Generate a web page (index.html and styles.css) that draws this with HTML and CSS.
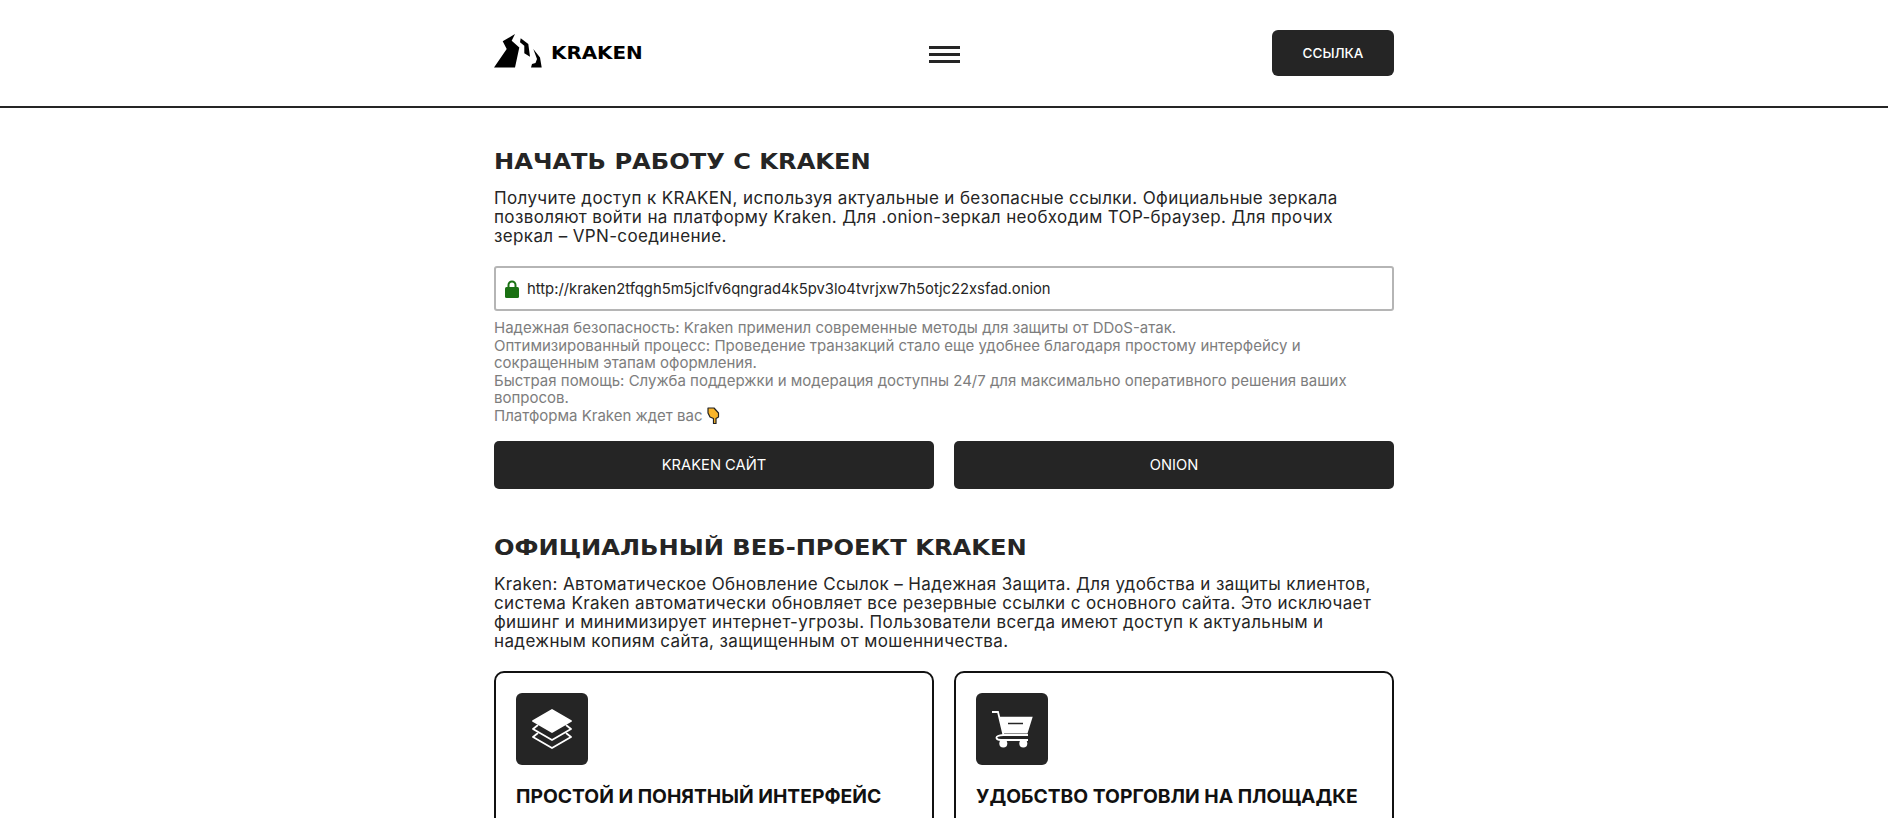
FILE: index.html
```html
<!DOCTYPE html>
<html lang="ru">

<head>
    <meta charset="UTF-8">
    <meta name="viewport" content="width=device-width, initial-scale=1.0">
    <title>Kraken</title>
    <link rel="stylesheet" href="styles.css">
</head>

<body>
    <header class="site-header">
        <div class="container header-row">
            <a class="logo" href="#">
                <svg class="logo-icon" viewBox="0 0 48 34" width="48" height="34">
                    <path fill="#000" d="M21 0 L8.700 7.300 L12.700 15 L0 33.400 H21 L25.300 13.400 L17.700 6.700 Z" />
                    <path fill="#000" d="M26.700 4.300 L34.300 10 L36 22.700 L30.300 19.300 L30.300 11.700 L26 8.300 Z" />
                    <path fill="#000" d="M39.300 15 L46 23.400 L47.700 33.400 H37 L38 30 L41.500 29 L43 25 Z" />
                </svg>
                <span class="logo-text">KRAKEN</span>
            </a>
            <button class="burger" aria-label="Меню"><span></span><span></span><span></span></button>
            <a class="header-link" href="#">ССЫЛКА</a>
        </div>
    </header>

    <main class="container">
        <section class="block-start">
            <h2>НАЧАТЬ РАБОТУ С KRAKEN</h2>
            <p class="lead">Получите доступ к KRAKEN, используя актуальные и безопасные ссылки. Официальные зеркала позволяют войти на платформу Kraken. Для .onion-зеркал необходим TOP-браузер. Для прочих зеркал – VPN-соединение.</p>

            <div class="url-box">
                <svg class="lock" viewBox="0 0 14 18" width="14" height="18">
                    <path fill="none" stroke="#1a7113" stroke-width="2" d="M3.500 8 V5 a3.500 3.500 0 0 1 7 0 V8" />
                    <rect fill="#1a7113" x="0" y="7" width="14" height="11" rx="1.500" />
                </svg>
                <span>http://kraken2tfqgh5m5jclfv6qngrad4k5pv3lo4tvrjxw7h5otjc22xsfad.onion</span>
            </div>

            <p class="note">Надежная безопасность: Kraken применил современные методы для защиты от DDoS-атак.<br>
                Оптимизированный процесс: Проведение транзакций стало еще удобнее благодаря простому интерфейсу и сокращенным этапам оформления.<br>
                Быстрая помощь: Служба поддержки и модерация доступны 24/7 для максимально оперативного решения ваших вопросов.<br>
                Платформа Kraken ждет вас
                <svg class="hand" viewBox="0 0 13 18" width="13" height="18">
                    <path fill="#f9b52b" stroke="#222" stroke-width="1.200" stroke-linejoin="round" d="M1 1 H7 L11.500 6 V10 L9 11.500 V16.500 H6.500 V11.500 L3 10 L1 6 Z" />
                </svg></p>

            <div class="two-col">
                <a class="big-button" href="#">KRAKEN САЙТ</a>
                <a class="big-button" href="#">ONION</a>
            </div>
        </section>

        <section class="block-project">
            <h2>ОФИЦИАЛЬНЫЙ ВЕБ-ПРОЕКТ KRAKEN</h2>
            <p class="lead">Kraken: Автоматическое Обновление Ссылок – Надежная Защита. Для удобства и защиты клиентов, система Kraken автоматически обновляет все резервные ссылки с основного сайта. Это исключает фишинг и минимизирует интернет-угрозы. Пользователи всегда имеют доступ к актуальным и надежным копиям сайта, защищенным от мошенничества.</p>

            <div class="two-col cards">
                <div class="card">
                    <div class="card-icon">
                        <svg viewBox="0 0 40 40" width="40" height="40" fill="none" stroke="#fff" stroke-width="1.800" stroke-linejoin="round">
                            <path d="M20 1 L39 12 L20 23 L1 12 Z" fill="#fff" />
                            <path d="M6 16 L1 20 L20 31 L39 20 L34 16" />
                            <path d="M6 24 L1 28 L20 39 L39 28 L34 24" />
                        </svg>
                    </div>
                    <h3>ПРОСТОЙ И ПОНЯТНЫЙ ИНТЕРФЕЙС</h3>
                </div>
                <div class="card">
                    <div class="card-icon">
                        <svg viewBox="0 0 41 40" width="41" height="40" fill="none">
                            <path d="M0 3 H6 L11.500 26 H36" stroke="#fff" stroke-width="1.800" />
                            <path fill="#fff" d="M7.500 7.700 H40.700 L35.500 24.500 H11.300 Z" />
                            <path d="M16 14.500 H31" stroke="#252525" stroke-width="1.500" />
                            <path d="M11.500 26 Q4 26.500 4.500 29 Q5 31 9 31 H36" stroke="#fff" stroke-width="1.800" />
                            <circle cx="11.300" cy="34.500" r="4" fill="#fff" />
                            <circle cx="31.300" cy="34.500" r="4" fill="#fff" />
                        </svg>
                    </div>
                    <h3>УДОБСТВО ТОРГОВЛИ НА ПЛОЩАДКЕ</h3>
                </div>
            </div>
        </section>
    </main>
</body>

</html>
```

FILE: styles.css
```css
html, body {
    height: 100%;
    overflow: hidden;
}

body {
    font-family: Inter, "Noto Sans", Arial, sans-serif;
    margin: 0;
    padding: 0;
    background-color: #fff;
    color: #252525;
}

.container {
    width: 900px;
    margin: 0 auto;
}

.site-header {
    height: 106px;
    border-bottom: 2px solid #252525;
}

.header-row {
    display: grid;
    grid-template-columns: 1fr auto 1fr;
    align-items: center;
    height: 100%;
}

.logo {
    display: flex;
    align-items: center;
    gap: 9px;
    text-decoration: none;
    color: #000;
}

.logo-icon {
    margin-top: -5px;
}

.logo-text {
    font-family: "DejaVu Sans", sans-serif;
    font-weight: 700;
    font-size: 17px;
    transform: scaleX(1.17);
    transform-origin: left center;
}

.burger {
    display: flex;
    flex-direction: column;
    gap: 4px;
    width: 31px;
    padding: 0;
    margin-top: 3px;
    background: none;
    border: none;
}

.burger span {
    display: block;
    height: 3px;
    background-color: #252525;
}

.header-link {
    justify-self: end;
    width: 122px;
    height: 46px;
    display: flex;
    align-items: center;
    justify-content: center;
    background-color: #252525;
    color: #fff;
    font-size: 13.500px;
    font-weight: 500;
    border-radius: 6px;
    text-decoration: none;
}

h2 {
    font-family: "DejaVu Sans", sans-serif;
    font-size: 21px;
    line-height: 26px;
    font-weight: 700;
    margin: 0 0 14px;
    color: #252525;
    transform: scaleX(1.15);
    transform-origin: left center;
}

.block-start {
    padding-top: 41px;
}

.block-project {
    padding-top: 46px;
}

.lead {
    margin: 0;
    font-size: 17px;
    letter-spacing: 0.37px;
    line-height: 19px;
}

.url-box {
    display: flex;
    align-items: center;
    gap: 8px;
    height: 41px;
    margin-top: 20px;
    padding: 0 9px;
    border: 2px solid #b5b5b5;
    border-radius: 3px;
    font-size: 14.800px;
}

.note {
    margin: 8px 0 0;
    font-size: 15px;
    line-height: 17.500px;
    color: #7d7d7d;
}

.hand {
    margin: -4px 0;
}

.two-col {
    display: grid;
    grid-template-columns: 1fr 1fr;
    gap: 20px;
}

.big-button {
    display: flex;
    align-items: center;
    justify-content: center;
    height: 48px;
    margin-top: 17px;
    background-color: #252525;
    color: #fff;
    font-size: 14.700px;
    border-radius: 5px;
    text-decoration: none;
}

.cards {
    margin-top: 20px;
}

.card {
    height: 300px;
    padding: 20px;
    border: 2px solid #111;
    border-radius: 10px;
}

.card-icon {
    width: 72px;
    height: 72px;
    display: flex;
    align-items: center;
    justify-content: center;
    background-color: #252525;
    border-radius: 6px;
}

h3 {
    margin: 19px 0 0;
    font-size: 19.300px;
    line-height: 24px;
    font-weight: 700;
    color: #111;
}
```
